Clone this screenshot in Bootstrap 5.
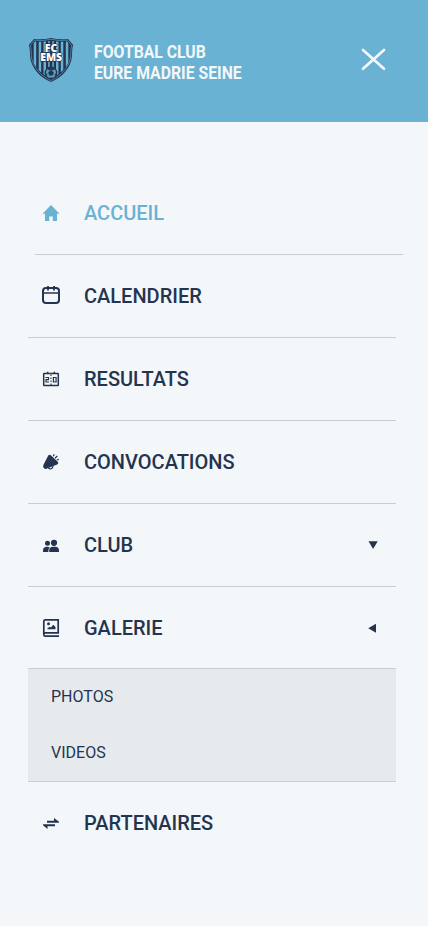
<!DOCTYPE html>
<html lang="fr">
<head>
<meta charset="utf-8">
<meta name="viewport" content="width=device-width, initial-scale=1">
<title>Footbal Club Eure Madrie Seine</title>
<link href="https://cdn.jsdelivr.net/npm/bootstrap@5.3.0/dist/css/bootstrap.min.css" rel="stylesheet">
<style>
  body { background: #f3f7fa; color: #24344f; font-family: Roboto, "Liberation Sans", sans-serif; min-height: 926px; }
  .site-head { background: #6ab2d4; height: 122px; padding: 0 41px 2px 28px; }
  .club-name { color: #f3f7fa; font-size: 17.5px; line-height: 21px; font-weight: 700; width: 170px; margin-left: 20px; padding-top: 6px; transform: scaleX(.901); transform-origin: left; white-space: nowrap; }
  .menu { width: 368px; margin: 50px 0 0 28px; }
  .menu-row { height: 83px; border-bottom: 1px solid #c8cdd3; padding-left: 7px; padding-right: 17px; font-size: 20px; font-weight: 500; color: inherit; text-decoration: none; }
  .menu-row .label { margin-left: 17px; }
  .menu-row.current { color: #6ab2d4; margin-left: 7px; margin-right: -7px; padding-left: 0; }
  .menu-row.open { height: 82px; }
  .menu-row.final { border-bottom: 0; height: 81px; }
  .sub { background: #e6eaed; height: 113px; border-bottom: 1px solid #c8cdd3; }
  .sub a { height: 56px; padding-left: 23px; font-size: 16px; color: inherit; text-decoration: none; }
</style>
</head>
<body>
<header class="site-head d-flex align-items-center">
  <svg width="46" height="46" viewBox="0 0 46 46" aria-hidden="true">
    <defs><clipPath id="shield"><path d="M7 4.500Q15 5.500 23 3.700Q31 5.500 39 4.500L42 8.700V20C41 29 33 37 23 41.500C13 37 5 29 4 20V8.700Z"/></clipPath></defs>
    <path d="M6 2Q15 3 23 1Q31 3 40 2L45.200 8Q44 11 44 19C43 31 34 40.500 23 45C12 40.500 3 31 2 19Q2 11 .8 8Z" fill="#24344f"/>
    <path d="M6.600 3.200Q15 4.200 23 2.300Q31 4.200 39.400 3.200L43.600 8.300Q42.700 12 42.700 19C41.700 30 33 39 23 43.500C13 39 4.300 30 3.300 19Q3.300 12 2.400 8.300Z" fill="none" stroke="#6ab2d4" stroke-width=".6"/>
    <g clip-path="url(#shield)" fill="#6ab2d4"><path d="M5.700 3h2.500v40H5.700zM10.700 3h2.500v40h-2.500zM15.500 3h2.500v40h-2.500zM20.200 3h1.500v40h-1.500zM24.300 3h1.500v40h-1.500zM28 3h2.500v40H28zM32.800 3h2.500v40h-2.500zM37.800 3h2.500v40h-2.500z"/></g>
    <circle cx="23" cy="36" r="5.800" fill="#5b9dbd" stroke="#24344f" stroke-width="1.300"/>
    <path d="M23 33.300l2.800 2-1 3.200h-3.600l-1-3.200zM19 31.800l3-1.200 1 .8 1-.8 3 1.200-2 1.400h-4zM17.500 36l1.800 1-.3 2.800zM28.500 36l-1.800 1 .3 2.800zM21 40.500h4l-2 1.200z" fill="#24344f"/>
    <g fill="#fff" stroke="#24344f" stroke-width="1.400" paint-order="stroke" font-family="'Open Sans', sans-serif" font-weight="800" font-size="11.300" text-anchor="middle"><text x="23" y="14.900" textLength="12.500" lengthAdjust="spacingAndGlyphs">FC</text><text x="23.200" y="24.100" textLength="22" lengthAdjust="spacingAndGlyphs">EMS</text></g>
  </svg>
  <div class="club-name">FOOTBAL CLUB<br>EURE MADRIE SEINE</div>
  <svg class="ms-auto" width="28" height="28" viewBox="0 0 28 28" role="img" aria-label="Fermer"><path d="M4 3.900L25 22.700M25 3.900L4 22.700" stroke="#f3f7fa" stroke-width="2.700" stroke-linecap="round"/></svg>
</header>
<nav class="menu d-flex flex-column">
  <a class="menu-row current d-flex align-items-center" href="#">
    <svg width="32" height="32" viewBox="0 0 32 32" fill="currentColor"><path d="M16 8L24.500 16.800H22V24H17.800V19.500H14.200V24H10V16.800H7.500Z"/></svg>
    <span class="label">ACCUEIL</span>
  </a>
  <a class="menu-row d-flex align-items-center" href="#">
    <svg width="32" height="32" viewBox="0 0 32 32" fill="none" stroke="currentColor" stroke-width="2"><rect x="8" y="8" width="16" height="15" rx="3"/><path d="M8 13h16" stroke-width="1.500"/><path d="M13 6v4.500M19 6v4.500" stroke-width="1.800"/></svg>
    <span class="label">CALENDRIER</span>
  </a>
  <a class="menu-row d-flex align-items-center" href="#">
    <svg width="32" height="32" viewBox="0 0 32 32" fill="none" stroke="currentColor" stroke-width="1.500"><rect x="8.700" y="10.500" width="14.600" height="12" rx=".5"/><path d="M12.700 8.700v2M19.300 8.700v2"/><path d="M10.500 14.500h3v2.200h-2.500v2.300h3M18.400 14.500h2.700v4.500h-2.700z" stroke-width="1.200"/><path d="M16 11.500v1.500M16 14.500v1.500M16 17.500v1.500M16 20.500v1.500" stroke-width="1.100"/></svg>
    <span class="label">RESULTATS</span>
  </a>
  <a class="menu-row d-flex align-items-center" href="#">
    <svg width="32" height="32" viewBox="0 0 32 32" fill="currentColor"><path d="M13.400 9.300Q14.600 8.200 15.800 9.200L23 16Q23.800 17.600 22.200 18.400L12 22.400Q10.500 23.700 9 22.300Q7.300 20.500 8.500 18.800Z"/><path d="M13.300 22Q16.500 24.500 18.200 20.200M18.200 10.300L19.300 8.400M20 12.200L22.300 10M21.800 14L23.800 13.400" fill="none" stroke="currentColor" stroke-width="1.200"/></svg>
    <span class="label">CONVOCATIONS</span>
  </a>
  <a class="menu-row d-flex align-items-center" href="#">
    <svg width="32" height="32" viewBox="0 0 32 32" fill="currentColor"><circle cx="12.500" cy="14.200" r="2.500"/><circle cx="19" cy="13.800" r="3.100"/><path d="M8 23V21.500Q8 17.800 12 17.800Q13.500 17.800 14.600 18.300Q13.400 19.500 13.300 23ZM14.200 23V21.500Q14.200 17.800 18 17.800H20.200Q24 17.800 24 21.500V23Z"/></svg>
    <span class="label">CLUB</span>
    <svg class="ms-auto" width="12" height="12" viewBox="0 0 12 12" fill="currentColor"><path d="M1.500 2.200h9.200L6.100 10z"/></svg>
  </a>
  <a class="menu-row open d-flex align-items-center" href="#">
    <svg width="32" height="32" viewBox="0 0 32 32" fill="none" stroke="currentColor" stroke-width="1.700"><path d="M8.800 22.500V9.300Q8.800 7.800 10.300 7.800H23.200V20.800H10.200Q8.800 20.800 8.800 22.500Q8.800 24.200 10.200 24.200H24"/><path d="M12.500 17.300V16.200L14.800 14.800 16 15.500 18.200 12.800 20.500 15 20.500 17.300Z" fill="currentColor" stroke="none"/><circle cx="13.500" cy="11.800" r="1.500" fill="currentColor" stroke="none"/></svg>
    <span class="label">GALERIE</span>
    <svg class="ms-auto" width="12" height="12" viewBox="0 0 12 12" fill="currentColor"><path d="M9 1.700v9L1.200 6.200z"/></svg>
  </a>
  <div class="sub">
    <a class="d-flex align-items-center" href="#">PHOTOS</a>
    <a class="d-flex align-items-center" href="#">VIDEOS</a>
  </div>
  <a class="menu-row final d-flex align-items-center" href="#">
    <svg width="32" height="32" viewBox="0 0 32 32" fill="currentColor"><path d="M12 13.700H19V11L24 14.700V15.700H12ZM20 17.300H8V18.300L12.500 22V19.300H20Z"/></svg>
    <span class="label">PARTENAIRES</span>
  </a>
</nav>
<script src="https://cdn.jsdelivr.net/npm/bootstrap@5.3.0/dist/js/bootstrap.bundle.min.js"></script>
</body>
</html>
